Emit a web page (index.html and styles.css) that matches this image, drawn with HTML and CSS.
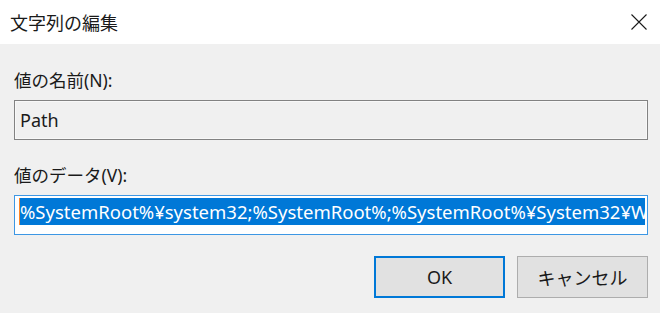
FILE: index.html
```html
<!DOCTYPE html>
<html lang="ja">
  <head>
    <meta charset="UTF-8" />
    <meta name="viewport" content="width=device-width, initial-scale=1.0" />
    <title>文字列の編集</title>
    <link rel="stylesheet" href="styles.css">
  </head>
  <body>
    <div class="dialog">
      <div class="titlebar">
        <span class="title">文字列の編集</span>
        <span class="close">
          <svg width="16" height="16" viewBox="0 0 16 16">
            <path d="M0.5 0.5 L15.5 15.5 M15.5 0.5 L0.5 15.5" stroke="#1a1a1a" stroke-width="1.1" fill="none" />
          </svg>
        </span>
      </div>

      <div class="content">
        <div class="label">値の名前(N):</div>
        <div class="field readonly">Path</div>

        <div class="label second">値のデータ(V):</div>
        <div class="field focused">
          <span class="selected">%SystemRoot%¥system32;%SystemRoot%;%SystemRoot%¥System32¥Wbem;%SYSTEMROOT%¥System32¥WindowsPowerShell¥v1.0¥</span>
        </div>

        <div class="buttons">
          <button class="btn default">OK</button>
          <button class="btn">キャンセル</button>
        </div>
      </div>
    </div>
  </body>
</html>
```

FILE: styles.css
```css
body {
  margin: 0;
  background-color: #f0f0f0;
  font-family: "Noto Sans", "Noto Sans CJK JP", sans-serif;
  color: #000;
}
.dialog {
  width: 660px;
  height: 313px;
  overflow: hidden;
}
.titlebar {
  height: 44px;
  background-color: #fff;
  display: flex;
  align-items: center;
  justify-content: space-between;
  padding: 0 13px 0 10px;
}
.title {
  font-size: 18px;
  color: #1a1a1a;
}
.close {
  display: flex;
}
.content {
  padding: 22px 12px 0 14px;
}
.label {
  font-size: 17.5px;
  line-height: 28px;
  height: 28px;
  margin-bottom: 6px;
  color: #1a1a1a;
}
.label.second {
  margin-top: 21px;
}
.field {
  height: 40px;
  box-sizing: border-box;
  white-space: nowrap;
  overflow: hidden;
}
.readonly {
  border: 1px solid #828282;
  box-shadow: inset 0 0 0 1px #f8f8f8;
  padding: 0 5px;
  font-size: 18px;
  line-height: 38px;
  color: #1a1a1a;
}
.focused {
  border: 1px solid #3d97e4;
  background-color: #fff;
  padding: 2px 2px 0 4px;
}
.selected {
  display: block;
  overflow: hidden;
  font-size: 18.5px;
  line-height: 27px;
  height: 27px;
  background-color: #0078d7;
  color: #fff;
  border-left: 1px solid #ff8728;
}
.buttons {
  display: flex;
  justify-content: flex-end;
  gap: 12px;
  margin-top: 21px;
}
.btn {
  width: 131px;
  height: 42px;
  box-sizing: border-box;
  background-color: #e1e1e1;
  border: 1px solid #adadad;
  font-family: "Noto Sans", "Noto Sans CJK JP", sans-serif;
  font-size: 18px;
  color: #1a1a1a;
  padding: 0;
}
.btn.default {
  border: 2px solid #0078d7;
}
```
